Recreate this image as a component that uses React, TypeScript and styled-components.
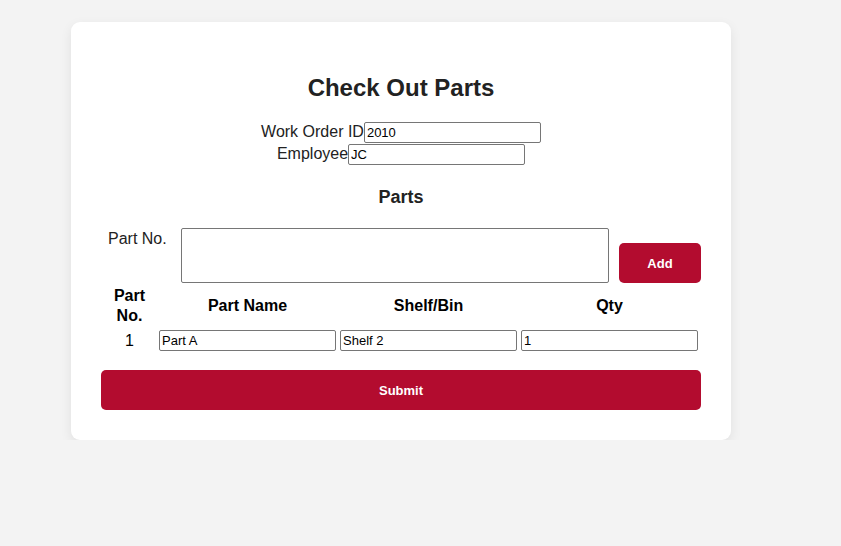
import React from "react";
import styled, { createGlobalStyle } from "styled-components";

const Global = createGlobalStyle`
  html, body { margin: 0; padding: 0; background: #f3f3f3; }
  body { font-family: "Liberation Sans", Arial, sans-serif; color: #000; }
`;

const Page = styled.div`
  padding: 22px 0 0 71px;
`;

const Card = styled.div`
  width: 600px;
  padding: 30px;
  background: #fff;
  border-radius: 9px;
  box-shadow: 0 4px 12px rgba(0, 0, 0, 0.08);
`;

const Title = styled.h2`
  margin: 22px 0 19px;
  font-size: 24px;
  line-height: 28px;
  font-weight: 700;
  color: #222;
  text-align: center;
`;

const FieldRow = styled.div`
  display: flex;
  justify-content: center;
  align-items: center;
  font-size: 16px;
  line-height: 22px;
  height: 22px;
`;

const Label = styled.label`
  color: #222;
`;

const TextInput = styled.input<{ $w?: number }>`
  box-sizing: border-box;
  width: ${(p) => p.$w ?? 177}px;
  height: 21px;
  padding: 1px 2px;
  border: 1px solid #767676;
  border-radius: 2px;
  font-family: "Liberation Sans", Arial, sans-serif;
  font-size: 13px;
  color: #000;
  background: #fff;
  outline: none;
`;

const SubTitle = styled.h3`
  margin: 21px 0 20px;
  font-size: 18px;
  line-height: 22px;
  font-weight: 700;
  color: #222;
  text-align: center;
`;

const AddRow = styled.div`
  display: flex;
  align-items: flex-start;
  padding-left: 7px;
`;

const PartLabel = styled.label`
  width: 73px;
  font-size: 16px;
  line-height: 18px;
  color: #222;
  padding-top: 2px;
`;

const PartArea = styled.textarea`
  box-sizing: border-box;
  width: 428px;
  height: 55px;
  border: 1px solid #767676;
  border-radius: 2px;
  resize: none;
  margin: 0;
  outline: none;
`;

const RedButton = styled.button<{ $w: number }>`
  box-sizing: border-box;
  width: ${(p) => p.$w}px;
  height: 40px;
  border: none;
  border-radius: 5px;
  background: #b30c2f;
  color: #fff;
  font-family: "Liberation Sans", Arial, sans-serif;
  font-size: 13px;
  font-weight: 700;
  cursor: pointer;
`;

const AddButton = styled(RedButton)`
  margin-left: 10px;
  margin-top: 15px;
`;

const Table = styled.table`
  width: 600px;
  border-spacing: 2px;
  table-layout: fixed;
  margin-top: 0;
`;

const Th = styled.th<{ $w: number }>`
  width: ${(p) => p.$w}px;
  padding: 1px;
  font-size: 16px;
  line-height: 20px;
  font-weight: 700;
  text-align: center;
  vertical-align: middle;
`;

const Td = styled.td`
  padding: 1px;
  font-size: 16px;
  text-align: center;
`;

const SubmitButton = styled(RedButton)`
  display: block;
  margin-top: 16px;
`;

export default function App() {
  return (
    <>
      <Global />
      <Page>
        <Card>
          <Title>Check Out Parts</Title>
          <FieldRow>
            <Label>Work Order ID</Label>
            <TextInput defaultValue="2010" />
          </FieldRow>
          <FieldRow>
            <Label>Employee</Label>
            <TextInput defaultValue="JC" />
          </FieldRow>
          <SubTitle>Parts</SubTitle>
          <AddRow>
            <PartLabel>Part No.</PartLabel>
            <PartArea />
            <AddButton $w={82}>Add</AddButton>
          </AddRow>
          <Table>
            <thead>
              <tr>
                <Th $w={51}>Part No.</Th>
                <Th $w={177}>Part Name</Th>
                <Th $w={177}>Shelf/Bin</Th>
                <Th $w={177}>Qty</Th>
              </tr>
            </thead>
            <tbody>
              <tr>
                <Td>1</Td>
                <Td>
                  <TextInput defaultValue="Part A" />
                </Td>
                <Td>
                  <TextInput defaultValue="Shelf 2" />
                </Td>
                <Td>
                  <TextInput defaultValue="1" />
                </Td>
              </tr>
            </tbody>
          </Table>
          <SubmitButton $w={600}>Submit</SubmitButton>
        </Card>
      </Page>
    </>
  );
}
